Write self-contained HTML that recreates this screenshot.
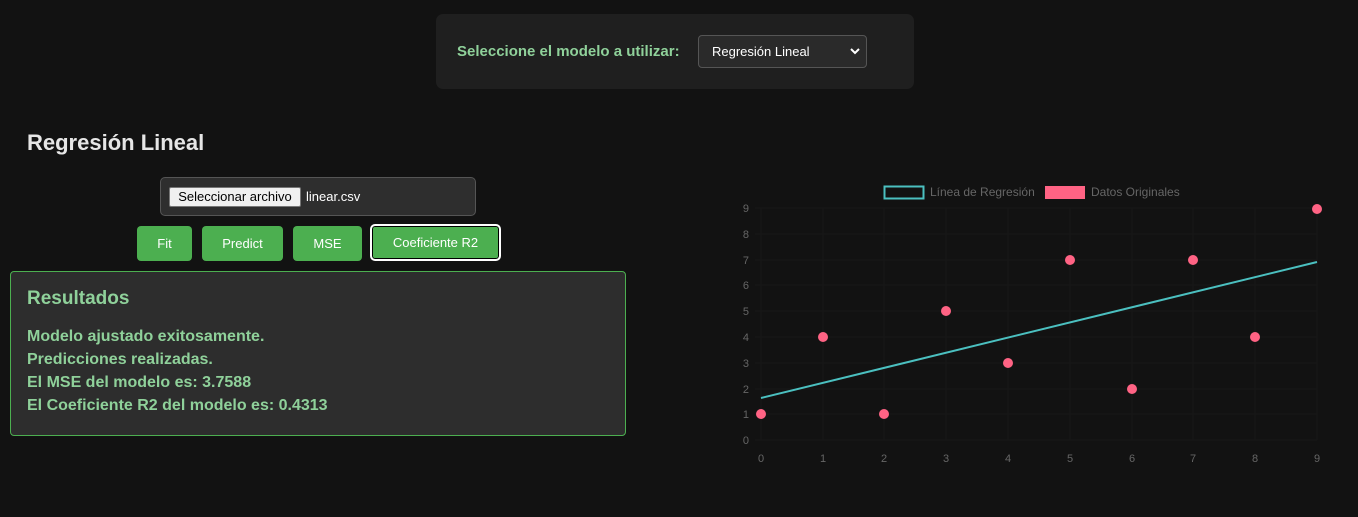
<!DOCTYPE html>
<html><head><meta charset="utf-8"><style>
body{margin:0;width:1358px;height:517px;background:#121212;font-family:"Liberation Sans",sans-serif;position:relative;overflow:hidden}
.top{position:absolute;left:436px;top:14px;width:478px;height:75px;background:#1f1f1f;border-radius:7px}
.top .lbl{position:absolute;left:21px;top:29px;color:#8fd19a;font-weight:bold;font-size:15px}
.sel{position:absolute;left:262px;top:21px;width:169px;height:33px;box-sizing:border-box;border:1px solid #555;border-radius:4px;background:#2a2a2a;color:#fff;font-size:13px;line-height:31px;padding-left:13px}
.sel svg{position:absolute;right:6px;top:11px}
h2{position:absolute;left:27px;top:130px;margin:0;color:#e6e6e6;font-size:22px}
.file{position:absolute;left:160px;top:177px;width:316px;height:39px;box-sizing:border-box;border:1px solid #555;border-radius:5px;background:#2e2e2e}
.fbtn{position:absolute;left:8px;top:9px;height:20px;width:132px;box-sizing:border-box;background:#f0f0f0;border:1px solid #767676;border-radius:2px;font-size:13px;color:#000;line-height:18px;text-align:center}
.fname{position:absolute;left:145px;top:11px;color:#fff;font-size:13px}
.b{position:absolute;top:226px;height:35px;background:#4caf50;border-radius:4px;color:#fff;font-size:13px;line-height:35px;text-align:center}
.res{position:absolute;left:10px;top:271px;width:616px;height:165px;box-sizing:border-box;border:1px solid #4caf50;border-radius:4px;background:#2d2d2d;color:#8fd19a;font-weight:bold}
.res .h{position:absolute;left:16px;top:16px;font-size:19px}
.res .l{position:absolute;left:16px;font-size:16px}
</style></head><body>
<div class="top"><div class="lbl">Seleccione el modelo a utilizar:</div>
<div class="sel">Regresión Lineal<svg width="10" height="8" viewBox="0 0 10 8"><path d="M1 2 L5 6 L9 2" stroke="#fff" stroke-width="2" fill="none"/></svg></div></div>
<h2>Regresión Lineal</h2>
<div class="file"><div class="fbtn">Seleccionar archivo</div><div class="fname">linear.csv</div></div>
<div class="b" style="left:137px;width:55px">Fit</div>
<div class="b" style="left:202px;width:81px">Predict</div>
<div class="b" style="left:293px;width:69px">MSE</div>
<div class="b" style="left:370px;width:131px;height:37px;top:224px;box-sizing:border-box;border:2px solid #fff;line-height:33px;border-radius:5px;box-shadow:0 0 0 1px #000 inset">Coeficiente R2</div>
<div class="res"><div class="h">Resultados</div>
<div class="l" style="top:56px">Modelo ajustado exitosamente.</div>
<div class="l" style="top:79px">Predicciones realizadas.</div>
<div class="l" style="top:102px">El MSE del modelo es: 3.7588</div>
<div class="l" style="top:125px">El Coeficiente R2 del modelo es: 0.4313</div></div>
<svg style="position:absolute;left:0;top:0" width="1358" height="517" font-family="Liberation Sans,sans-serif" font-size="11" fill="#666">
<g stroke="#181818" stroke-width="1">
<line x1="761" y1="208" x2="761" y2="440"/><line x1="823" y1="208" x2="823" y2="440"/><line x1="884" y1="208" x2="884" y2="440"/><line x1="946" y1="208" x2="946" y2="440"/><line x1="1008" y1="208" x2="1008" y2="440"/><line x1="1070" y1="208" x2="1070" y2="440"/><line x1="1132" y1="208" x2="1132" y2="440"/><line x1="1193" y1="208" x2="1193" y2="440"/><line x1="1255" y1="208" x2="1255" y2="440"/><line x1="1317" y1="208" x2="1317" y2="440"/>
<line x1="755" y1="208" x2="1317" y2="208"/><line x1="755" y1="234" x2="1317" y2="234"/><line x1="755" y1="260" x2="1317" y2="260"/><line x1="755" y1="285" x2="1317" y2="285"/><line x1="755" y1="311" x2="1317" y2="311"/><line x1="755" y1="337" x2="1317" y2="337"/><line x1="755" y1="363" x2="1317" y2="363"/><line x1="755" y1="389" x2="1317" y2="389"/><line x1="755" y1="414" x2="1317" y2="414"/><line x1="755" y1="440" x2="1317" y2="440"/>
</g>
<g text-anchor="end"><text x="749" y="212">9</text><text x="749" y="238">8</text><text x="749" y="264">7</text><text x="749" y="289">6</text><text x="749" y="315">5</text><text x="749" y="341">4</text><text x="749" y="367">3</text><text x="749" y="393">2</text><text x="749" y="418">1</text><text x="749" y="444">0</text></g>
<g text-anchor="middle"><text x="761" y="462">0</text><text x="823" y="462">1</text><text x="884" y="462">2</text><text x="946" y="462">3</text><text x="1008" y="462">4</text><text x="1070" y="462">5</text><text x="1132" y="462">6</text><text x="1193" y="462">7</text><text x="1255" y="462">8</text><text x="1317" y="462">9</text></g>
<rect x="884.5" y="186.5" width="39" height="12" fill="none" stroke="#4bc0c0" stroke-width="2"/>
<text x="930" y="196" font-size="12">Línea de Regresión</text>
<rect x="1045" y="186" width="40" height="13" fill="#ff6384"/>
<text x="1091" y="196" font-size="12">Datos Originales</text>
<line x1="761" y1="398" x2="1317" y2="262" stroke="#4bc0c0" stroke-width="2"/>
<g fill="#ff6384"><circle cx="761" cy="414" r="5"/><circle cx="823" cy="337" r="5"/><circle cx="884" cy="414" r="5"/><circle cx="946" cy="311" r="5"/><circle cx="1008" cy="363" r="5"/><circle cx="1070" cy="260" r="5"/><circle cx="1132" cy="389" r="5"/><circle cx="1193" cy="260" r="5"/><circle cx="1255" cy="337" r="5"/><circle cx="1317" cy="209" r="5"/></g>
</svg>
</body></html>
